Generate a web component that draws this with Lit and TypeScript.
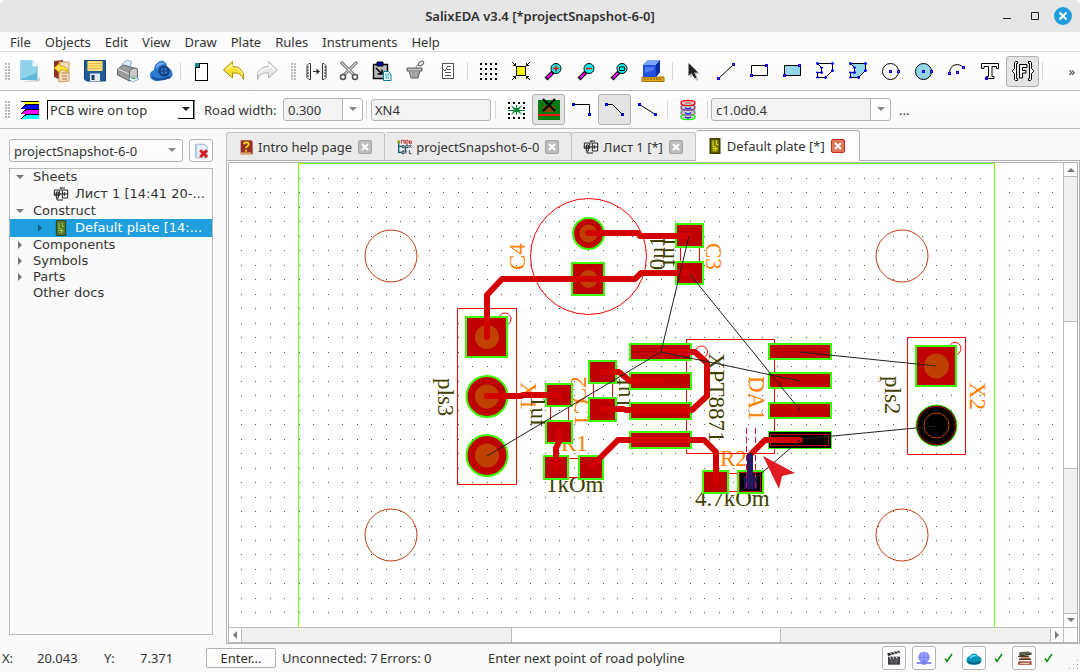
import { LitElement, html, svg, css, type TemplateResult } from 'lit';
import { customElement, property } from 'lit/decorators.js';
import { classMap } from 'lit/directives/class-map.js';

const handle = (x: number, y: number) =>
  svg`<path d="M${x - 1.5} ${y - 1.5}h3v3h-3z" fill="#00f"/><path d="M${x - 0.5} ${y - 0.5}h1v1h-1z" fill="#f04"/>`;

const magnifier = (mark: unknown) => svg`
  <path d="M4 20l7-7" stroke="#000" stroke-width="4"/><path d="M5 19l5-5" stroke="#f0f" stroke-width="2"/>
  <circle cx="14" cy="9.500" r="5" fill="#00f5f5" stroke="#000"/>${mark}`;

/* Every picture is drawn on a 24 x 24 grid. */
const ICONS: Record<string, unknown> = {
  newFile: svg`<path d="M3.500 1.500h12l5 6v13.500h-17z" fill="#5fb8dc"/><path d="M3.500 1.500h12l5 6v6l-17 7z" fill="#8fd0ea"/><path d="M15.500 1.500l5 6h-5z" fill="#fff" stroke="#b5dff0"/><path d="M3.500 22.500h18l2-2-2-3v3.500z" fill="#a8a8a8" opacity=".7"/>`,
  openBook: svg`<path d="M4 2l9-1v21l-9-4z" fill="#8e3326"/><path d="M9 3h10v19l-10 1z" fill="#f3e0bd" stroke="#c8995a"/><path d="M12 14h5M12 17h5M12 20h5" stroke="#c06a48"/><path d="M4 9l6-5v3c5 0 8 2 8 7-2-3-5-3-8-3v3z" fill="#ffe23c" stroke="#b89000" stroke-width=".7"/>`,
  save: svg`<path d="M1.500 1.500h21v20.500h-19l-2-2z" fill="#215d99" stroke="#173f6d"/><path d="M4.500 2h15v10h-15z" fill="#ffe07a"/><path d="M4.500 4.500h15M4.500 7h15M4.500 9.500h15" stroke="#e9bb4a"/><path d="M7 14.500h10v7.500h-10z" fill="#dfe8ee"/><path d="M8.500 16h3v5h-3z" fill="#1d3e63"/>`,
  print: svg`<path d="M6 5l5-4 5 2-3 7-7-1z" fill="#d9ebfa" stroke="#7b93aa" stroke-width=".7"/><path d="M1.500 10l6-4 14 4v8l-8 4-12-6z" fill="#9a9a9a" stroke="#4d4d4d" stroke-width=".8"/><path d="M13.500 13c0-4 8-5 8-2v7l-8 4z" fill="#c9c9c9" stroke="#555" stroke-width=".8"/><path d="M2 10l11 5" stroke="#e8e8e8"/><path d="M12 20l6-3 5 3-6 3z" fill="#e9f7ff" stroke="#5f86a8" stroke-width=".7"/><path d="M15 20l3-2 2 2z" fill="#3fae42"/>`,
  cloud: svg`<path d="M1 16c0-3 2-4 4-5 0-4 2-7 6-9 4-1 7 2 7 6 3 1 5 3 5.500 7 0 4-3 5-6 5l-9 2c-4 0-7.500-2-7.500-6z" fill="#2c78d0"/><path d="M7 8c1-4 6-6 9-3-3 0-6 1-8 4z" fill="#74aeed"/><path d="M3 18c4 3 11 3 18 0" stroke="#164f9c" stroke-width="2" fill="none"/><circle cx="15" cy="12" r="4.500" fill="none" stroke="#163c72" stroke-width="2"/><path d="M15 8v8M11 12h8" stroke="#163c72"/>`,
  page: svg`<g shape-rendering="crispEdges"><path d="M6 7l3-3h9v17h-12z" fill="#fff" stroke="#000"/><path d="M6 4h4v4h-4z" fill="#0a8a82"/><path d="M6 8h4v-4" fill="none" stroke="#000"/></g>`,
  undo: svg`<path d="M1.500 11l9-8.500v5c7 0 12 4 11 13-2-5-5-7-11-6.500v5z" fill="#f8df2e" stroke="#a98b00"/><path d="M4 11l6-5.500v3.500c5 0 9 2 10.500 6" fill="none" stroke="#fff79a" stroke-width="1.200"/>`,
  redo: svg`<path d="M22.500 11l-9-8.500v5c-7 0-12 4-11 13 2-5 5-7 11-6.500v5z" fill="#e8e8e8" stroke="#b3b3b3"/><path d="M20 11l-6-5.500v3.500c-5 0-9 2-10.500 6" fill="none" stroke="#fff" stroke-width="1.200"/>`,
  spread: svg`<path d="M6.500 4.500h-1.500l-2 2v12l2 2h1.500zM18.500 4.500h1.500l2 2v12l-2 2h-1.500z" fill="#fff" stroke="#333"/><path d="M3 8h2M3 11h2M3 14h2M3 17h2M20 8h2M20 11h2M20 14h2M20 17h2M9 12.500h6" stroke="#333" fill="none"/><path d="M12.500 9.500l3.500 3-3.500 3z" fill="#333"/>`,
  scissors: svg`<path d="M4 3l13 13M20 3l-13 13" stroke="#555" stroke-width="3"/><path d="M4.500 3.500l12 12M19.500 3.500l-12 12" stroke="#e4e4e4" stroke-width="1.200"/><circle cx="6" cy="18" r="2.500" fill="#fff" stroke="#555" stroke-width="1.600"/><circle cx="18" cy="18" r="2.500" fill="#fff" stroke="#555" stroke-width="1.600"/>`,
  paste: svg`<path d="M3.500 5.500h14v14h-14z" fill="#b7b7b7" stroke="#000" stroke-width="1.400"/><path d="M7 3h6v4h-6z" fill="#0000b8" stroke="#000"/><path d="M6 9l6 6M12 10.500v4.500h-4.500" stroke="#000" stroke-width="1.500" fill="none"/><path d="M13.500 12.500h5l2.500 2.500v6.500h-7.500z" fill="#fff" stroke="#007d9c"/><path d="M15 15h4M15 17h4M15 19h4" stroke="#00b6d8"/>`,
  pot: svg`<path d="M4 9h15v3h-2l-2 7h-7l-2-7h-2z" fill="#9a9a9a" stroke="#666"/><path d="M5 10.500h13M8 13l1 5M13 13v5" stroke="#c9c9c9"/><ellipse cx="18" cy="4.500" rx="3" ry="1.800" transform="rotate(-35 18 4.500)" fill="#eee" stroke="#666"/><path d="M13 9c0-2 1-3 3-3" fill="none" stroke="#666"/>`,
  checklist: svg`<g shape-rendering="crispEdges" fill="none" stroke="#555"><path d="M6.500 4.500h11v15h-11z" fill="#fff"/><path d="M12 7.500h3M11 10.500h4M9 13.500h6M9 16.500h6"/></g><path d="M7 10l2 2 3-5" fill="none" stroke="#555"/>`,
  grid: svg`<path d="M4 4.500h17M4 9.500h17M4 14.500h17M4 19.500h17" stroke="#000" stroke-width="2" stroke-dasharray="2 3" shape-rendering="crispEdges"/>`,
  fit: svg`<path d="M7.500 7.500h9v9h-9z" fill="#ff0" stroke="#000" shape-rendering="crispEdges"/><path d="M3 3l3.500 3.500M6.500 4v2.500h-2.500M21 3l-3.500 3.500M17.500 4v2.500h2.500M3 21l3.500-3.500M6.500 20v-2.500h-2.500M21 21l-3.500-3.500M17.500 20v-2.500h2.500" fill="none" stroke="#000"/>`,
  zoomIn: magnifier(svg`<path d="M11 9.500h6M14 6.500v6" stroke="#f00" stroke-width="1.600"/>`),
  zoomOut: magnifier(svg`<path d="M11 9.500h6" stroke="#f00" stroke-width="1.600"/>`),
  zoomFit: magnifier(svg`<path d="M11.500 8h5v3.500h-5z" fill="none" stroke="#000"/>`),
  cube: svg`<path d="M1 18h22v4.500h-22z" fill="#e0a71b" stroke="#a2740b"/><path d="M4 19v2M7 19v2M10 19v2M13 19v2M16 19v2M19 19v2" stroke="#775200"/><path d="M2 6l5-5h12v12l-4 5h-13z" fill="#1d4fdb"/><path d="M2 6l5-5h12l-4 5z" fill="#7ca4f7"/><path d="M15 6l4-5v12l-4 5z" fill="#0c2ca0"/><path d="M4 8h9v3l-9 3z" fill="#4d7df0"/>`,
  pointer: svg`<path d="M9 5v14l3.500-3 3 6 2-1.500-2.500-5.500h4z" fill="#999" opacity=".6"/><path d="M7.500 4v13l3-3 3 5.500 2-1-2.500-5h4z" fill="#222"/>`,
  line: svg`<path d="M4.500 19.500l15-14" stroke="#000"/>${handle(4.5, 19.5)}${handle(19.5, 5.5)}`,
  rect: svg`<path d="M4.500 6.500h16v10h-16z" fill="#fff" stroke="#000"/>${handle(4.5, 16.5)}${handle(19.5, 6.5)}`,
  fillRect: svg`<path d="M4.500 6.500h16v10h-16z" fill="#92d6ea" stroke="#000"/>${handle(4.5, 16.5)}${handle(19.5, 6.5)}`,
  poly: svg`<path d="M4.500 4.500h15v7l-7 7h-8v-5h4v-5z" fill="#fff" stroke="#000"/><path d="M3 4.500h3M4.500 3v3M18 4.500h3M19.500 3v3M18 11.500h3M19.500 10v3M11 18.500h3M12.500 17v3M3 18.500h3M3 13.500h3M7 13.500h3M8.500 12v3M7 8.500h3" stroke="#00f" stroke-width="1.400"/>`,
  fillPoly: svg`<path d="M4.500 4.500h15v7l-7 7h-8v-5h4v-5z" fill="#92d6ea" stroke="#000"/><path d="M3 4.500h3M4.500 3v3M18 4.500h3M19.500 3v3M18 11.500h3M19.500 10v3M11 18.500h3M12.500 17v3M3 18.500h3M3 13.500h3M7 13.500h3M8.500 12v3M7 8.500h3" stroke="#00f" stroke-width="1.400"/>`,
  circle: svg`<circle cx="11.500" cy="12.500" r="8" fill="#fff" stroke="#000"/>${handle(11.5, 12.5)}${handle(19.5, 12.5)}`,
  fillCircle: svg`<circle cx="11.500" cy="12.500" r="8" fill="#92d6ea" stroke="#000"/>${handle(11.5, 12.5)}${handle(19.5, 12.5)}`,
  arc: svg`<path d="M4.500 14c0-9 10-11 14-5" fill="none" stroke="#000"/>${handle(4.5, 14.5)}${handle(12.5, 13.5)}${handle(18.5, 8.5)}`,
  text: svg`<path d="M3.500 4.500h17v5h-2v-2h-4.500v10h2v2h-7.500v-2h2v-10h-4.500v2h-2.500z" fill="#fff" stroke="#000"/>${handle(8.5, 19.5)}`,
  fragment: svg`<g fill="none" stroke="#000"><path d="M6.500 2.500h-2l-1 1v6l-2 2v1l2 2v6l1 1h2v-2h-1v-15h1zM17.500 2.500h2l1 1v6l2 2v1l-2 2v6l-1 1h-2v-2h1v-15h-1z" fill="#fff"/><path d="M8.500 5.500h7.500v3h-4.500v3h3.500v2.500h-3.500v5h-3z" fill="#fff"/></g>`,
  layers: svg`<g shape-rendering="crispEdges"><path d="M3 21l4-4h14v4z" fill="#0ff"/><path d="M3 16l4-4h14v4z" fill="#f0f"/><path d="M3 11l4-4h14v4z" fill="#00f"/><path d="M5 6l2-2h14v2z" fill="#ff0"/><path d="M3.500 20.500l5-4.500h12.500M3 16l5-4.500h13M3 11l5-4.500h13M3 3.500h18" fill="none" stroke="#000"/></g>`,
  joinGrid: svg`<path d="M4 5h17M4 20h17" stroke="#000" stroke-width="2" stroke-dasharray="2 3" shape-rendering="crispEdges"/><path d="M4 9h2v2h-2zM4 15h2v2h-2zM19 9h2v2h-2zM19 15h2v2h-2z"/><path d="M7 7l3 5-3 5 4-3h1v3h1v-3h1l4 3-3-5 3-5-4 3h-1v-3h-1v3h-1z" fill="#0b8a3c"/><path d="M4 12.500h17" stroke="#0b8a3c"/>`,
  drc: svg`<path d="M1 2h22v20h-22z" fill="#067a12"/><path d="M6 8h12v6h-12z" fill="#7c4a00"/><path d="M1 16h22v2h-22z" fill="#f01414"/><path d="M6 1l12 12M18 1l-12 12" stroke="#000" stroke-width="2.200"/>`,
  orthogonal: svg`<path d="M3.500 6.500h16v10" fill="none" stroke="#000"/><path d="M2 5h3v3h-3zM18 15h3v3h-3z" fill="#00d"/>`,
  bent: svg`<path d="M3.500 6.500h6l10 10" fill="none" stroke="#000"/><path d="M2 5h3v3h-3zM18 15h3v3h-3z" fill="#00d"/>`,
  straight: svg`<path d="M3.500 6.500l16 10" fill="none" stroke="#000"/><path d="M2 5h3v3h-3zM18 15h3v3h-3z" fill="#00d"/>`,
  via: svg`<g fill="#d0d0d0" stroke="#777" stroke-width="1.400"><ellipse cx="12" cy="19" rx="7" ry="2.600" stroke="#0f0"/><ellipse cx="12" cy="14.500" rx="7" ry="2.600"/><ellipse cx="12" cy="9.500" rx="7" ry="2.600" stroke="#848"/><ellipse cx="12" cy="5" rx="7" ry="2.600" stroke="#f00"/></g><path d="M9 5h6M9 19q3 2 6 0" stroke="#f33" fill="none"/><path d="M9 9.500q3 3 6 0M9 14.500q3 3 6 0M9 19q3 2 6 0" stroke="#22f" stroke-width="1.500" fill="none"/>`,
  deleteSheet: svg`<path d="M5 3h12l3 3v15h-15z" fill="#e9f1fb" stroke="#7f9cc0"/><path d="M5 3h2v18h-2z" fill="#b5cbe6"/><path d="M11 11l9 9M20 11l-9 9" stroke="#d81e1e" stroke-width="4"/>`,
  sheet: svg`<g fill="none" stroke="#222" stroke-width="1.500"><path d="M2 6h8v8h-8zM14 6h8v12h-8zM5 9h3v9h-3zM17 9v6M1 12h22M10 3h8M12 3v4M6 18v3h9"/></g>`,
  plateGreen: svg`<path d="M5 1h14v22h-14z" fill="#55752b" stroke="#2b4212" stroke-width="1.500"/><path d="M9 4v9h3M14 4v6h3M8 16h8M9 19h2M13 13v7" stroke="#a4cb52" stroke-width="1.500" fill="none"/>`,
  plate: svg`<path d="M5 1h14v22h-14z" fill="#7d7a00" stroke="#3d3b00" stroke-width="2.500"/><path d="M9 4v9h3M14 4v6h3M8 16h8M9 19h2M13 13v7" stroke="#e9e200" stroke-width="1.500" fill="none"/>`,
  help: svg`<path d="M4 2h16l2 2v19h-18z" fill="#963126"/><path d="M4 20h16v3h-16z" fill="#d9a45b"/><path d="M9 8c0-4 7-4 7 0 0 3-4 3-4 6M12 16v3" fill="none" stroke="#ffe11e" stroke-width="2.500"/>`,
  project: svg`<path d="M4 4v17M4 11h5M4 20h5M14 11v9" stroke="#067" stroke-width="2"/><path d="M2 2h4v4h-4z" fill="#a8a000"/><path d="M8 7v-5h4v5M14 7v-5h4v4h-4M20 7v-4h3v4h-3" stroke="#b33" stroke-width="1.500" fill="none"/><path d="M9 10h3v3h-3zM15 9h3v4h-3zM20 9l3 4M23 9l-3 4M9 18h3v4h-3zM15 17v5M20 17v5h3" stroke="#345" stroke-width="1.500" fill="none"/>`,
  clapper: svg`<path d="M3 10h18v12h-18z" fill="#3b3b40"/><path d="M2 5l18-4 1 3-18 5z" fill="#2b2b2f"/><path d="M6 4l3 3M11 3l3 3M16 2l3 3M5 10l2 3M10 10l2 3M15 10l2 3" stroke="#fff" stroke-width="1.500"/><path d="M5 15h14M5 18h14M9 14v7M15 14v7" stroke="#77777f"/>`,
  globe: svg`<circle cx="12" cy="11" r="8.500" fill="#9aa2ff"/><path d="M12 2.500v17M3.500 11h17M8 3.500c-3 5-3 10 0 14M16 3.500c3 5 3 10 0 14" stroke="#6870ea" fill="none"/><path d="M1 18h22v3h-22z" fill="#8890f5"/><path d="M9 16h6v6h-6z" fill="#767eec"/>`,
  drop: svg`<path d="M2 15c0-4 3-5 5-6 2-4 8-4 10 0 3 1 5 3 5 6 0 5-4 6-10 6s-10-1-10-6z" fill="#0691b5"/><path d="M6 12c2-5 8-6 11-2-4-1-7 0-10 3z" fill="#53def5"/><path d="M4 17c5 3 11 3 16 0" stroke="#075c77" stroke-width="2" fill="none"/>`,
  books: svg`<path d="M4 3l14-1 3 3-14 2z" fill="#566047"/><path d="M5 5l2 3 14-2v-2" fill="none" stroke="#333d26" stroke-width="2"/><path d="M6 10h13l2 4h-14z" fill="#c5a36a"/><path d="M3 9h15M4 13h17" stroke="#513522" stroke-width="2"/><path d="M3 16h19v5h-19z" fill="#a84438"/><path d="M6 18h13v2h-13z" fill="#e8d0a4"/>`,
};

@customElement('eda-icon')
class EdaIcon extends LitElement {
  @property() name = '';
  @property({ type: Number }) size = 24;
  static styles = css`:host { display: block; flex: none; } svg { display: block; }`;
  render() {
    return html`<svg width=${this.size} height=${this.size} viewBox="0 0 24 24" fill="#000">${ICONS[this.name]}</svg>`;
  }
}

@customElement('eda-combo')
class EdaCombo extends LitElement {
  @property() value = '';
  @property() label = '';
  @property() look = 'plain';
  static styles = css`
    :host { display: block; }
    .box { display: grid; grid-template-columns: 1fr 20px; align-items: center; height: 23px; box-sizing: border-box;
      border: 1px solid #b4b4b4; border-radius: 3px; background: linear-gradient(#fff, #fbfbfb); overflow: hidden; }
    select { grid-area: 1 / 1 / 2 / 3; width: 100%; height: 100%; appearance: none; border: 0; background: none; outline: 0;
      padding: 0 22px 0 4px; color: #333; font: 13px "Noto Sans", sans-serif; }
    .arrow { grid-area: 1 / 2; display: flex; height: 100%; align-items: center; justify-content: center; pointer-events: none; }
    .editable { background: linear-gradient(to right, #f3f3f3 calc(100% - 20px), #fdfdfd calc(100% - 20px)); }
    .editable .arrow { border-left: 1px solid #b4b4b4; }
    .classic { height: 20px; grid-template-columns: 1fr 16px; border: 1px solid #000; border-right-color: #888; border-bottom-color: #fff; border-radius: 0; background: #fff; }
    .classic select { padding-left: 2px; }
    .classic .arrow { border-right: 1px solid #000; border-bottom: 1px solid #000; box-sizing: border-box; background: #fff; }
  `;
  render() {
    const cls = { box: true, editable: this.look === 'editable', classic: this.look === 'classic' };
    return html`<div class=${classMap(cls)}>
      <select aria-label=${this.label}><option>${this.value}</option></select>
      <span class="arrow"><svg width="8" height="5"><path d="M0 0h8l-4 4z" fill=${this.look === 'classic' ? '#222' : '#888'}/></svg></span>
    </div>`;
  }
}

const GREEN = '#3cff00';
const PAD = '#be0000';
const TRACE = '#d20000';
const HOLE = '#c04000';

type Pt = [number, number];
const ratsnest: [Pt, Pt][] = [
  [[689, 236], [661, 352]], [[689, 273], [800, 410]], [[661, 352], [800, 381]], [[661, 352], [487, 456]],
  [[800, 352], [936, 366]], [[802, 439], [936, 426]], [[750, 483], [800, 440]],
];
const traces: string[] = [
  '588,233 638,233 640,236 689,236',
  '689,273 641,273 635,279 502,279 487,295 487,337',
  '487,396 521,396 523,395 559,395',
  '559,431 559,442 556,448 556,467',
  '591,467 618,440 690,440 704,440 716,452 716,483',
  '603,372 619,372 630,381 661,381',
  '603,409 623,409 626,410 690,410',
  '661,352 695,352 707,363 707,396 692,410',
  '750,455 765,440 800,440',
];
/* x, y, width, height of the copper rectangles */
const pads: [number, number, number, number][] = [
  [571, 262, 34, 34], [675, 223, 29, 25], [675, 261, 29, 24], [465, 316, 43, 42], [545, 383, 28, 24], [545, 420, 28, 24],
  [543, 455, 26, 25], [578, 455, 26, 25], [588, 360, 29, 24], [588, 397, 29, 25], [702, 470, 27, 24], [915, 345, 42, 42],
  ...[343, 372, 402, 431].map((y) => [629, y, 63, 18] as [number, number, number, number]),
  ...[343, 372, 402].map((y) => [768, y, 64, 17] as [number, number, number, number]),
];
const labels: { t: string; x: number; y: number; a: number; v?: boolean }[] = [
  { t: 'C4', x: 525, y: 270, a: -90 }, { t: 'C3', x: 706, y: 243, a: 90 }, { t: 'X1', x: 521, y: 382, a: 90 },
  { t: 'C2', x: 586, y: 403, a: -90 }, { t: 'C1', x: 575, y: 399, a: 90 }, { t: 'DA1', x: 749, y: 376, a: 90 },
  { t: 'X2', x: 970, y: 382, a: 90 }, { t: 'R1', x: 561, y: 451, a: 0 }, { t: 'R2', x: 720, y: 466, a: 0 },
  { t: '1uf', x: 663, y: 236, a: 90, v: true }, { t: '0u1', x: 665, y: 270, a: -90, v: true },
  { t: '1uf', x: 531, y: 396, a: 90, v: true }, { t: '1uf', x: 630, y: 409, a: -90, v: true },
  { t: 'pls3', x: 438, y: 378, a: 90, v: true }, { t: 'pls2', x: 885, y: 376, a: 90, v: true },
  { t: 'XPT8871', x: 709, y: 353, a: 90, v: true }, { t: '1kOm', x: 546, y: 492, a: 0, v: true }, { t: '4.7kOm', x: 695, y: 506, a: 0, v: true },
];

@customElement('pcb-canvas')
class PcbCanvas extends LitElement {
  static styles = css`
    :host { display: block; overflow: hidden; background: #fff; min-width: 0; min-height: 0; }
    svg { display: block; width: 100%; height: 100%; }
    text { font: 23px "Liberation Serif", serif; fill: #ff8000; }
    .value { fill: #3f3f00; }
  `;
  private dots() {
    let d = '';
    for (let r = 0; r < 90; r++)
      for (let c = 0; c < 150; c++) d += `M${Math.round(240.6 + 14.49 * c)} ${Math.round(178 + 14.48 * r)}h1v1h-1z`;
    return d;
  }
  render() {
    return html`<svg role="img" aria-label="Circuit board layout">
      <g transform="translate(-229 -163)">
        <path d=${this.dots()} fill="#555" shape-rendering="crispEdges"/>
        <path d="M298 163h697v1h-697zM298 163h1v2000h-1zM994 163h1v2000h-1z" fill="#80ff00" shape-rendering="crispEdges"/>
        <g fill="none" stroke="#c04010">
          ${[[391, 256], [902, 256], [391, 535], [902, 535]].map(([x, y]) => svg`<circle cx=${x} cy=${y} r="26"/>`)}
        </g>
        ${labels.map((l) => svg`<text class=${l.v ? 'value' : ''} transform="translate(${l.x} ${l.y}) rotate(${l.a})">${l.t}</text>`)}
        <g fill="none" stroke="#f00">
          <circle cx="588.500" cy="256.500" r="58"/>
          <path d="M457.500 308.500h59v176h-59zM686.500 339.500h88v114h-88zM907.500 337.500h58v117h-58z"/>
          <path d="M680.500 240v30M699.500 240v30M550.500 400v30M568.500 400v30M593.500 375v30M612.500 375v30M560 458.500h30M560 477.500h30M720 473.500h25M720 491.500h25"/>
          <circle cx="505" cy="319" r="6"/><circle cx="701.500" cy="352" r="6"/><circle cx="955" cy="348.500" r="6"/>
        </g>
        <g fill=${PAD} stroke=${GREEN} stroke-width="2">
          ${pads.map(([x, y, w, h]) => svg`<rect x=${x + 1} y=${y + 1} width=${w - 2} height=${h - 2}/>`)}
          <circle cx="588.500" cy="233.500" r="15.500"/><circle cx="487" cy="396.500" r="20.500"/><circle cx="487" cy="455.500" r="20.500"/>
        </g>
        <g fill=${HOLE}>
          <circle cx="588.500" cy="233.500" r="9"/><circle cx="588.500" cy="279" r="9"/><circle cx="487" cy="337" r="12"/>
          <circle cx="487" cy="396.500" r="12"/><circle cx="487" cy="455.500" r="12"/><circle cx="936.500" cy="366" r="12.500"/>
        </g>
        <g fill="#000" stroke=${GREEN}>
          <rect x="768.500" y="431.500" width="63" height="17"/><rect x="738" y="471" width="25" height="22" stroke-width="2"/>
          <circle cx="936.500" cy="425.500" r="20.500"/>
        </g>
        <g fill="none" stroke=${PAD}>
          <rect x="770.500" y="434.500" width="58" height="11"/><rect x="739.500" y="472.500" width="21" height="19"/><circle cx="936.500" cy="425.500" r="19"/>
          <circle cx="936.500" cy="425.500" r="12.500" stroke=${HOLE}/>
        </g>
        <rect x="746" y="478" width="9" height="9" fill="#000040" stroke="#1e145e" stroke-width="4"/>
        <g fill="none" stroke=${TRACE} stroke-width="6" stroke-linecap="round" stroke-linejoin="round">
          ${traces.map((p) => svg`<polyline points=${p}/>`)}
          <path d="M750 456v27" stroke="#241a66"/>
        </g>
        <path d="M746.500 428v60M755.500 428v60" stroke="#c8143c" stroke-dasharray="6 3"/>
        <g stroke="#202020">
          ${ratsnest.map(([a, b]) => svg`<line x1=${a[0]} y1=${a[1]} x2=${b[0]} y2=${b[1]}/>`)}
        </g>
        <path d="M763 456l32 17-13 3-3 13z" fill="#e01b24"/>
      </g>
    </svg>`;
  }
}

const fileTools = ['newFile', 'openBook', 'save', 'print', 'cloud', '|', 'page', 'undo', 'redo'];
const editTools = ['spread', 'scissors', 'paste', 'pot', 'checklist', '|', 'grid', 'fit', 'zoomIn', 'zoomOut', 'zoomFit', 'cube', '|',
  'pointer', 'line', 'rect', 'fillRect', 'poly', 'fillPoly', 'circle', 'fillCircle', 'arc', 'text', '*fragment', '|'];
const wireTools = ['joinGrid', '*drc', 'orthogonal', '*bent', 'straight', '|', 'via', '|'];

@customElement('app-root')
class AppRoot extends LitElement {
  static styles = css`
    :host { display: flex; flex-direction: column; height: 100vh; box-sizing: border-box; overflow: hidden; background: #fafafa;
      color: #333; font: 13px/16px "Noto Sans", sans-serif; }
    button { font: inherit; color: inherit; padding: 0; border: 0; background: none; }
    .title { display: grid; grid-template-columns: 90px 1fr 90px; align-items: center; height: 32px; background: #e6e6e6; border-top-left-radius: 6px; border-top-right-radius: 6px; }
    .title h1 { margin: 0; grid-column: 2; text-align: center; font-size: 13px; font-weight: 600; color: #303030; }
    .controls { display: flex; align-items: center; justify-content: flex-end; gap: 8px; padding-right: 8px; }
    .controls button, .controls svg { display: block; }
    .menu { display: flex; height: 19px; align-items: center; gap: 14px; padding-left: 10px; border-bottom: 1px solid #dcdcdc; background: #fcfcfc; }
    .menu a { color: inherit; text-decoration: none; }
    .bar { display: flex; align-items: center; height: 38px; border-bottom: 1px solid #bdbdbd; background: linear-gradient(#fff, #f9f9f9); }
    .wires { height: 37px; }
    .grip { width: 5px; height: 17px; flex: none; margin: 0 2px 0 5px; background: radial-gradient(circle at 1px 1px, #bbb 1px, transparent 1px) 0 0 / 3px 3px; }
    .grip.mid { margin: 0 3px 0 8px; }
    .tool { display: flex; align-items: center; justify-content: center; width: 33px; height: 31px; box-sizing: border-box; border-radius: 3px; flex: none; border: 1px solid transparent; }
    .tool.on { border-color: #b0b0b0; background: #e4e4e4; }
    .sep { width: 1px; height: 18px; margin: 0 3px; background: #d8d8d8; flex: none; }
    .more { margin-left: auto; padding: 0 5px; }
    .layerIcon { margin: 0 5px 0 6px; }
    .layer { width: 148px; }
    .roadLabel { margin: 0 8px 0 9px; width: 71px; white-space: nowrap; }
    .road { width: 80px; }
    .net { width: 120px; height: 22px; box-sizing: border-box; margin: 0 1px; border: 1px solid #b4b4b4; border-radius: 3px; background: #f3f3f3; color: #333; font: inherit; padding: 0 3px; }
    .viaType { width: 180px; }
    .dots { padding-left: 8px; }
    .work { display: grid; grid-template-columns: 204px minmax(0, 1fr); grid-template-rows: minmax(0, 1fr); gap: 13px; flex: 1; min-height: 0; padding-left: 9px; }
    .side { display: flex; flex-direction: column; gap: 6px; padding: 10px 0 9px; min-height: 0; }
    .pick { display: flex; gap: 6px; }
    .pick eda-combo { flex: 1; }
    .small { display: flex; align-items: center; justify-content: center; box-sizing: border-box; width: 24px; height: 23px; border: 1px solid #b4b4b4; border-radius: 3px; background: #fdfdfd; flex: none; }
    .tree { flex: 1; border: 1px solid #b9b9b9; background: #fafafa; font-family: "DejaVu Sans", sans-serif; min-height: 0; overflow: hidden; }
    .row { display: flex; align-items: center; width: 100%; height: 16px; padding-left: 6px; text-align: left; white-space: nowrap; }
    .child { height: 18px; padding-left: 26px; }
    .selected { background: #209fdf; color: #fff; }
    .tick { width: 8px; height: 8px; flex: none; margin-right: 9px; }
    .child eda-icon { margin-right: 6px; }
    .docs { display: flex; flex-direction: column; min-width: 0; min-height: 0; }
    .tabs { display: flex; align-items: flex-end; height: 32px; border-bottom: 1px solid #b0b0b0; box-sizing: border-box; }
    .tab { display: flex; align-items: center; gap: 6px; box-sizing: border-box; height: 28px; padding: 0 12px 0 11px; border: 1px solid #c0c0c0; border-bottom: 0; border-left: 0; background: #ebebeb; white-space: nowrap; border-radius: 3px 3px 0 0; }
    .tab:first-child { border-left: 1px solid #c0c0c0; }
    .tab.current { height: 31px; margin-bottom: -1px; background: #fff; border-color: #b0b0b0; padding-right: 14px; }
    .tab button { display: flex; align-items: center; gap: 4px; white-space: nowrap; }
    .tab .x { justify-content: center; width: 14px; height: 14px; box-sizing: border-box; border: 1px solid #a4a4a4; border-radius: 2px; background: #bdbdbd; }
    .tab.current .x { border-color: #c82c14; background: #e0755c; }
    .pane { flex: 1; display: grid; grid-template-rows: minmax(0, 1fr); min-height: 0; border: 1px solid #b4b4b4; border-top: 0; padding: 1px 1px 0; background: #fcfcfc; }
    .view { display: grid; grid-template-columns: minmax(0, 1fr) 14px; grid-template-rows: minmax(0, 1fr) 15px; min-height: 0; border: 1px solid #b4b4b4; }
    .vbar, .hbar { display: flex; background: #f0f0f0; }
    .vbar { flex-direction: column; border-left: 1px solid #bcbcbc; }
    .hbar { border-top: 1px solid #bcbcbc; }
    .corner { border: solid #bcbcbc; border-width: 1px 0 0 1px; }
    .step { display: flex; align-items: center; justify-content: center; flex: none; width: 13px; height: 14px; background: #fdfdfd; }
    .vbar .step:first-child { border-bottom: 1px solid #bcbcbc; }
    .vbar .step:last-child { border-top: 1px solid #bcbcbc; }
    .hbar .step:first-child { border-right: 1px solid #bcbcbc; }
    .hbar .step:last-child { border-left: 1px solid #bcbcbc; }
    .thumb { background: #fff; border: 0 solid #bcbcbc; }
    .vbar .thumb { flex: 146; border-width: 1px 0; }
    .hbar .thumb { flex: 268; border-width: 0 1px; }
    .status { display: flex; align-items: center; height: 28px; white-space: nowrap; }
    .status > span { flex: none; }
    .sx { width: 35px; padding-left: 2px; } .vx { width: 67px; } .sy { width: 36px; } .vy { width: 66px; }
    .enter { width: 70px; height: 20px; box-sizing: border-box; border: 1px solid #b4b4b4; border-radius: 2px; background: #fdfdfd; margin-right: 6px; }
    .unc { width: 98px; } .err { width: 108px; }
    .tray { display: flex; align-items: center; margin-left: auto; padding-right: 1px; }
    .tray .small { height: 24px; }
    .tray .small:first-child { margin-right: 6px; }
    .mark { margin: 0 9px 0 8px; }
    .resize { align-self: flex-end; width: 11px; height: 11px; margin-left: 6px; }
    .before, .after { flex: 145; }
    .hbar .before { flex: 269; } .hbar .after { flex: 269; }
  `;

  private tools(list: string[]): TemplateResult[] {
    return list.map((n) => {
      if (n === '|') return html`<span class="sep"></span>`;
      const on = n.startsWith('*');
      const name = on ? n.slice(1) : n;
      return html`<button class=${classMap({ tool: true, on })} aria-label=${name}><eda-icon name=${name}></eda-icon></button>`;
    });
  }
  private arrow(d: string, color = '#777') {
    return html`<svg class="tick" viewBox="0 0 8 8"><path d=${d} fill=${color}/></svg>`;
  }
  private step(label: string, d: string) {
    return html`<button class="step" aria-label=${label}><svg width="8" height="8"><path d=${d} fill="#777"/></svg></button>`;
  }
  private tab(icon: string, label: string, current = false) {
    return html`<div class=${classMap({ tab: true, current })}>
      <button role="tab" aria-selected=${current ? 'true' : 'false'}><eda-icon name=${icon} size="16"></eda-icon>${label}</button>
      <button class="x" aria-label="Close tab"><svg width="8" height="8"><path d="M1 1l6 6M7 1l-6 6" stroke="#fff" stroke-width="2"/></svg></button>
    </div>`;
  }
  private check() {
    return html`<svg class="mark" width="9" height="10"><path d="M1 5.500l2 3 5-7.500" fill="none" stroke="#0a8a0a" stroke-width="1.500"/></svg>`;
  }
  render() {
    const down = 'M0 2h8l-4 4z';
    const right = 'M2 0v8l4-4z';
    return html`
      <header class="title">
        <h1>SalixEDA v3.4 [*projectSnapshot-6-0]</h1>
        <div class="controls">
          <button aria-label="Minimize"><svg width="20" height="18"><path d="M5 11.500h8" stroke="#222"/></svg></button>
          <button aria-label="Maximize"><svg width="20" height="18"><path d="M5.500 5.500h7v7h-7z" fill="none" stroke="#222"/></svg></button>
          <button aria-label="Close"><svg width="18" height="18"><circle cx="9" cy="9" r="9" fill="#1f9ede"/><path d="M5.500 5.500l7 7M12.500 5.500l-7 7" stroke="#fff" stroke-width="2"/></svg></button>
        </div>
      </header>
      <nav class="menu">
        ${['File', 'Objects', 'Edit', 'View', 'Draw', 'Plate', 'Rules', 'Instruments', 'Help'].map((m) => html`<a href="#">${m}</a>`)}
      </nav>
      <div class="bar">
        <span class="grip"></span>${this.tools(fileTools)}<span class="grip mid"></span>${this.tools(editTools)}
        <button class="more" aria-label="More tools">»</button>
      </div>
      <div class="bar wires">
        <span class="grip"></span><eda-icon class="layerIcon" name="layers"></eda-icon>
        <eda-combo class="layer" look="classic" label="Layer" value="PCB wire on top"></eda-combo>
        <span class="roadLabel">Road width:</span>
        <eda-combo class="road" look="editable" label="Road width" value="0.300"></eda-combo>
        <span class="sep"></span>
        <input class="net" aria-label="Net name" value="XN4">
        <span class="sep"></span>
        ${this.tools(wireTools)}
        <eda-combo class="viaType" look="editable" label="Via type" value="c1.0d0.4"></eda-combo>
        <button class="dots" aria-label="Choose via">...</button>
      </div>
      <main class="work">
        <aside class="side">
          <div class="pick">
            <eda-combo label="Project" value="projectSnapshot-6-0"></eda-combo>
            <button class="small" aria-label="Close project"><eda-icon name="deleteSheet" size="18"></eda-icon></button>
          </div>
          <div class="tree">
            <button class="row">${this.arrow(down)}Sheets</button>
            <button class="row child">${this.arrow('')}<eda-icon name="sheet" size="16"></eda-icon>Лист 1 [14:41 20-...</button>
            <button class="row">${this.arrow(down)}Construct</button>
            <button class="row child selected">${this.arrow(right, '#1a5e85')}<eda-icon name="plateGreen" size="16"></eda-icon>Default plate [14:...</button>
            <button class="row">${this.arrow(right)}Components</button>
            <button class="row">${this.arrow(right)}Symbols</button>
            <button class="row">${this.arrow(right)}Parts</button>
            <button class="row">${this.arrow('')}Other docs</button>
          </div>
        </aside>
        <section class="docs">
          <div class="tabs" role="tablist">
            ${this.tab('help', 'Intro help page')}${this.tab('project', 'projectSnapshot-6-0')}${this.tab('sheet', 'Лист 1 [*]')}${this.tab('plate', 'Default plate [*]', true)}
          </div>
          <div class="pane"><div class="view">
            <pcb-canvas></pcb-canvas>
            <div class="vbar">${this.step('Up', 'M0 6h8l-4-4z')}<span class="before"></span><span class="thumb"></span><span class="after"></span>${this.step('Down', down)}</div>
            <div class="hbar">${this.step('Left', 'M6 0v8l-4-4z')}<span class="before"></span><span class="thumb"></span><span class="after"></span>${this.step('Right', right)}</div>
            <div class="corner"></div>
          </div></div>
        </section>
      </main>
      <footer class="status">
        <span class="sx">X:</span><span class="vx">20.043</span><span class="sy">Y:</span><span class="vy">7.371</span>
        <button class="enter">Enter...</button>
        <span class="unc">Unconnected: 7</span><span class="err">Errors: 0</span><span>Enter next point of road polyline</span>
        <div class="tray">
          <button class="small" aria-label="Record"><eda-icon name="clapper" size="16"></eda-icon></button>
          <button class="small" aria-label="Network"><eda-icon name="globe" size="16"></eda-icon></button>${this.check()}
          <button class="small" aria-label="Cloud"><eda-icon name="drop" size="18"></eda-icon></button>${this.check()}
          <button class="small" aria-label="Library"><eda-icon name="books" size="17"></eda-icon></button>${this.check()}
          <svg class="resize" viewBox="0 0 11 11"><path d="M9 1h1v1h-1zM9 5h1v1h-1zM5 5h1v1h-1zM9 9h1v1h-1zM5 9h1v1h-1zM1 9h1v1h-1z" fill="#aaa"/></svg>
        </div>
      </footer>`;
  }
}
